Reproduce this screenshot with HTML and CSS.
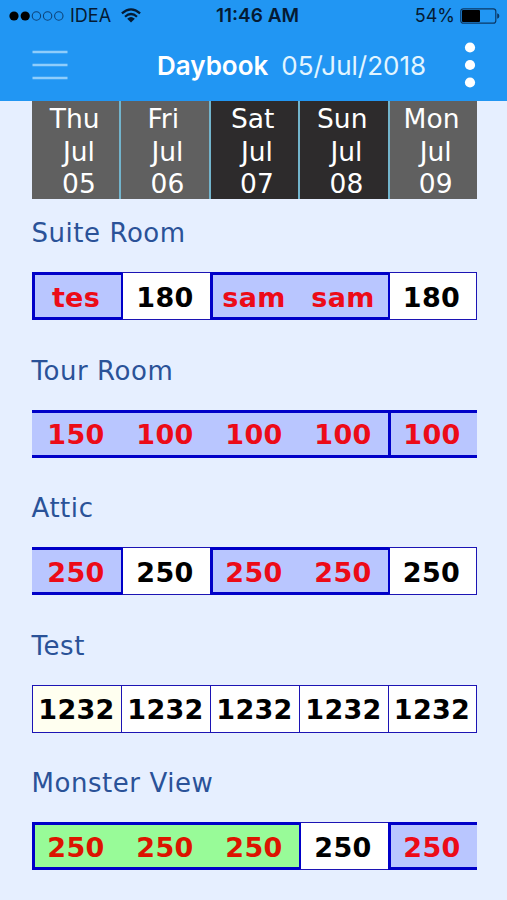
FILE: index.html
```html
<!DOCTYPE html>
<html lang="en">

<head>
    <meta charset="UTF-8">
    <meta name="viewport" content="width=device-width, initial-scale=1.0">
    <title>Daybook</title>
    <link rel="stylesheet" href="styles.css">
</head>

<body>
    <header class="header">
        <div class="status-bar">
            <div class="carrier">
                <svg class="signal" width="56" height="12" viewBox="0 0 56 12">
                    <circle cx="5" cy="6" r="4.6"/>
                    <circle cx="16.2" cy="6" r="4.6"/>
                    <g fill="none" stroke="#0d4379" stroke-width="1.1">
                        <circle cx="27.4" cy="6" r="4.2"/>
                        <circle cx="38.6" cy="6" r="4.2"/>
                        <circle cx="49.8" cy="6" r="4.2"/>
                    </g>
                </svg>
                <span class="network">IDEA</span>
                <svg class="wifi" width="20" height="15" viewBox="0 0 20 15">
                    <g fill="none" stroke="#051b33" stroke-width="2.2">
                        <path d="M.9 5.3Q10-2.7 19.1 5.3"/>
                        <path d="M4 8.7Q10 3.3 16 8.7"/>
                    </g>
                    <path fill="#051b33" d="M6.2 10.7Q10 7.3 13.8 10.7L10 14.5z"/>
                </svg>
            </div>
            <span class="time">11:46 AM</span>
            <div class="battery">
                <span class="percent">54%</span>
                <svg width="40" height="16" viewBox="0 0 40 16">
                    <rect x=".8" y=".8" width="35" height="14.4" rx="2.5" fill="none" stroke="#0b3866" stroke-width="1.2"/>
                    <rect x="2" y="2" width="18" height="12" rx="1"/>
                    <path d="M37.2 5.2q2.2.6 2.2 2.8t-2.2 2.8z" fill="#0b3866"/>
                </svg>
            </div>
        </div>
        <div class="toolbar">
            <svg class="menu" width="36" height="30" viewBox="0 0 36 30">
                <path d="M.5 2H35.5M.5 15H35.5M.5 28H35.5" stroke="#8fcdfb" stroke-width="2.6"/>
            </svg>
            <h1 class="title">Daybook</h1>
            <span class="date">05/Jul/2018</span>
            <svg class="more" width="12" height="46" viewBox="0 0 12 46" fill="#fff">
                <circle cx="6" cy="5.5" r="5.1"/>
                <circle cx="6" cy="23" r="5.1"/>
                <circle cx="6" cy="40.5" r="5.1"/>
            </svg>
        </div>
    </header>

    <main class="daybook">
        <div class="days">
            <div class="day">Thu<br>&nbsp;Jul<br>&nbsp;05</div>
            <div class="day">Fri<br>&nbsp;Jul<br>&nbsp;06</div>
            <div class="day weekend">Sat<br>&nbsp;Jul<br>&nbsp;07</div>
            <div class="day weekend">Sun<br>&nbsp;Jul<br>&nbsp;08</div>
            <div class="day">Mon<br>&nbsp;Jul<br>&nbsp;09</div>
        </div>

        <section class="room">
            <h2>Suite Room</h2>
            <div class="cells">
                <div class="cell booked start">tes</div>
                <div class="cell after">180</div>
                <div class="cell booked start">sam</div>
                <div class="cell booked">sam</div>
                <div class="cell after">180</div>
            </div>
        </section>

        <section class="room">
            <h2>Tour Room</h2>
            <div class="cells">
                <div class="cell booked">150</div>
                <div class="cell booked">100</div>
                <div class="cell booked">100</div>
                <div class="cell booked">100</div>
                <div class="cell booked start">100</div>
            </div>
        </section>

        <section class="room">
            <h2>Attic</h2>
            <div class="cells">
                <div class="cell booked">250</div>
                <div class="cell after">250</div>
                <div class="cell booked start">250</div>
                <div class="cell booked">250</div>
                <div class="cell after">250</div>
            </div>
        </section>

        <section class="room">
            <h2>Test</h2>
            <div class="cells">
                <div class="cell today">1232</div>
                <div class="cell">1232</div>
                <div class="cell">1232</div>
                <div class="cell">1232</div>
                <div class="cell">1232</div>
            </div>
        </section>

        <section class="room">
            <h2>Monster View</h2>
            <div class="cells">
                <div class="cell booked arrived start">250</div>
                <div class="cell booked arrived">250</div>
                <div class="cell booked arrived">250</div>
                <div class="cell after">250</div>
                <div class="cell booked start">250</div>
            </div>
        </section>
    </main>
</body>

</html>
```
FILE: styles.css
```css
* {
    box-sizing: border-box;
}

body {
    margin: 0;
    height: 900px;
    overflow: hidden;
    background-color: #e6efff;
    font-family: "DejaVu Sans", Verdana, sans-serif;
}

.header {
    height: 101px;
    background-color: #2196f3;
    font-family: Inter, sans-serif;
}

.status-bar {
    display: grid;
    grid-template-columns: 1fr auto 1fr;
    align-items: center;
    height: 31px;
    padding: 0 7px 0 9px;
    font-size: 18px;
    color: #051b33;
}

.carrier,
.battery {
    display: flex;
    align-items: center;
}

.network {
    margin: 0 10px 0 5px;
}

.time {
    font-size: 19px;
    font-weight: 600;
    margin-left: 6px;
}

.battery {
    justify-content: flex-end;
    gap: 5px;
}

.toolbar {
    display: flex;
    align-items: center;
    height: 68px;
    padding: 0 31px 0 32px;
    color: #fff;
}

.title {
    margin: 0 13px 0 89px;
    font-size: 26px;
    font-weight: 600;
}

.date {
    font-size: 26px;
    color: #e2f5ff;
}

.more {
    margin-left: auto;
}

.daybook {
    width: 445px;
    margin-left: 31.5px;
}

.days {
    display: grid;
    grid-template-columns: 87.5px repeat(3, 89.5px) 1fr;
    height: 98px;
}

.day {
    height: 98px;
    padding-top: 2px;
    padding-right: 3px;
    border-left: 2px solid #72b4cc;
    background-color: #606060;
    color: #fff;
    font-size: 26.5px;
    line-height: 32.5px;
    text-align: center;
}

.day:first-child {
    border-left-color: #606060;
}

.day.weekend {
    background-color: #2d2b2c;
}

.room {
    height: 137.5px;
    padding-top: 17px;
}

.room h2 {
    margin: 0 0 21px;
    font-size: 26px;
    font-weight: normal;
    line-height: 35px;
    letter-spacing: 0.55px;
    color: #2a5298;
}

.cells {
    display: grid;
    grid-template-columns: repeat(5, 1fr);
    height: 48px;
}

.cell {
    display: flex;
    align-items: center;
    justify-content: center;
    padding-top: 2px;
    border: 1px solid #1c14b4;
    border-right: none;
    background-color: #fff;
    color: #000;
    font-size: 27px;
    font-weight: bold;
    letter-spacing: 0.3px;
}

.cell:last-child {
    border-right: 1px solid #1c14b4;
}

.cell.after {
    padding-right: 2px;
    border-left: 2px solid #0000c8;
}

.cell.today {
    background-color: #fffff0;
}

.cell.booked {
    border: solid #0000c8;
    border-width: 3px 0;
    background-color: #b9c6ff;
    color: #ec0b18;
}

.cell.booked.start {
    padding-right: 3px;
    border-left-width: 3px;
}

.cell.booked.arrived {
    background-color: #98fb98;
    color: #dc1400;
}
```
